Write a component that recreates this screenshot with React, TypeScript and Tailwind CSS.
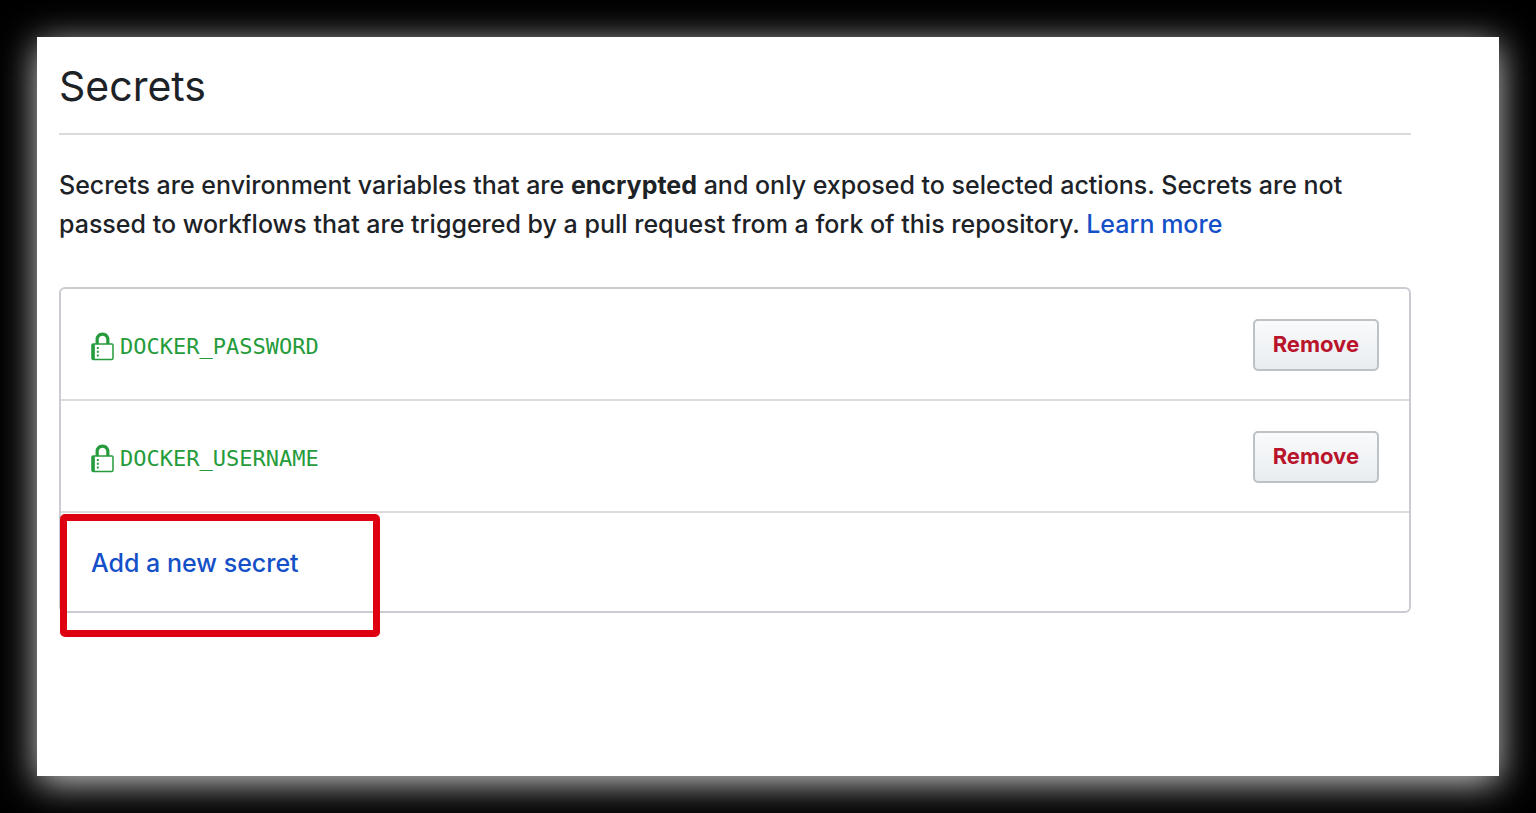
import React from "react";

const secrets = ["DOCKER_PASSWORD", "DOCKER_USERNAME"];

function LockIcon() {
  return (
    <svg viewBox="0 0 12 16" className="h-[30px] w-[23px] shrink-0" fill="currentColor" fillRule="evenodd" aria-hidden="true">
      <path d="M4 13H3v-1h1v1zm8-6v7c0 .55-.45 1-1 1H1c-.55 0-1-.45-1-1V7c0-.55.45-1 1-1h1.300V3.800C2.300 1.700 4 .2 6 .2s3.700 1.500 3.700 3.600V6H11c.55 0 1 .45 1 1zM4 6h4V3.900C8 2.800 7.100 2 6 2s-2 .8-2 1.900V6zm7.200 .8H1.900v7.400h9.300V6.800zM4 8H3v1h1V8zm0 2H3v1h1v-1z" />
    </svg>
  );
}

function SecretRow({ name }: { name: string }) {
  return (
    <li className="flex items-center justify-between border-b-2 border-[#d9dbdd] px-[30px] pt-[30px] pb-7">
      <div className="flex items-center gap-[6px] pt-[3px] text-[#259b3b]">
        <LockIcon />
        <code className="pt-px font-['DejaVu_Sans_Mono',monospace] text-[22px] leading-8">{name}</code>
      </div>
      <button
        type="button"
        aria-label={`Remove ${name}`}
        className="h-[52px] rounded-[5px] border-2 border-[#bfc2c5] bg-linear-to-b from-[#f9fafb] to-[#e9edf0] px-[18px] pb-[2px] text-[22px] leading-8 font-bold text-[#b8142c]"
      >
        Remove
      </button>
    </li>
  );
}

export default function App() {
  return (
    <div className="min-h-screen bg-black p-[37px] font-[Inter,sans-serif] text-[#1d2227]">
      <main className="min-h-[739px] bg-white pt-6 pr-[88px] pl-[22px] shadow-[0_7px_34px_rgba(255,255,255,0.8)]">
        <h1 className="border-b-2 border-[#d9dbdd] pb-[22px] text-[41px] leading-[50px]">Secrets</h1>
        <p className="mt-[31px] text-[25px] leading-[39px] font-medium">
          Secrets are environment variables that are <strong className="font-bold">encrypted</strong> and only exposed to selected actions. Secrets are not passed to workflows that are triggered by a pull request from a fork of this repository.{" "}
          <a href="#learn" className="text-[#1450c8]">Learn more</a>
        </p>
        <section className="relative mt-[43px] rounded-[6px] border-2 border-[#c9ccd0]">
          <ul>
            {secrets.map((name) => <SecretRow key={name} name={name} />)}
          </ul>
          <div className="px-[30px] pt-[30px] pb-7 text-[25px] leading-10 font-medium">
            <a href="#new" className="text-[#1450c8]">Add a new secret</a>
          </div>
          <div className="pointer-events-none absolute -bottom-[26px] -left-px h-[123px] w-80 rounded-[5px] border-[7px] border-[#de0010]" />
        </section>
      </main>
    </div>
  );
}
